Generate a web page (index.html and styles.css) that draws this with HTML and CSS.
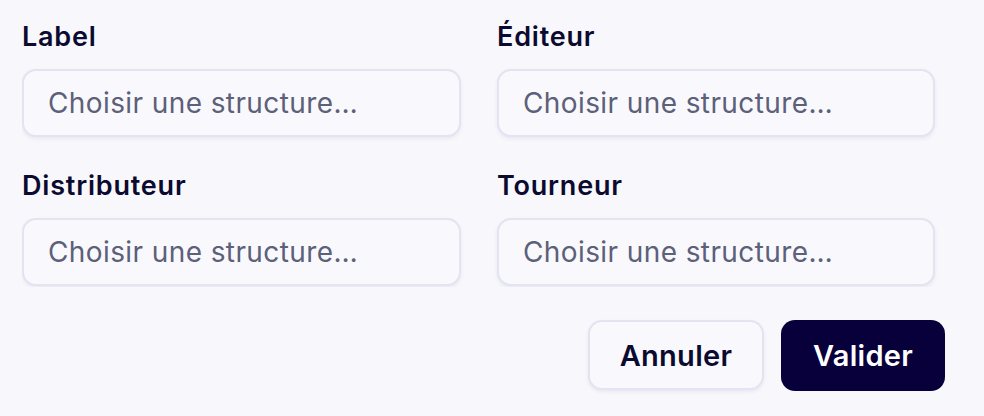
FILE: index.html
```html
<!DOCTYPE html>
<html lang="fr">
<head>
<meta charset="utf-8">
<title>Structures</title>
<link rel="stylesheet" href="styles.css">
</head>
<body>
<form class="form">
  <div class="grid">
    <div class="field">
      <label class="label" for="f1">Label</label>
      <input class="input" id="f1" type="text" placeholder="Choisir une structure…">
    </div>
    <div class="field">
      <label class="label" for="f2">Éditeur</label>
      <input class="input" id="f2" type="text" placeholder="Choisir une structure…">
    </div>
    <div class="field">
      <label class="label" for="f3">Distributeur</label>
      <input class="input" id="f3" type="text" placeholder="Choisir une structure…">
    </div>
    <div class="field">
      <label class="label" for="f4">Tourneur</label>
      <input class="input" id="f4" type="text" placeholder="Choisir une structure…">
    </div>
  </div>
  <div class="actions">
    <button type="button" class="btn btn-secondary">Annuler</button>
    <button type="button" class="btn btn-primary">Valider</button>
  </div>
</form>
</body>
</html>
```
FILE: styles.css
```css
html, body {
  margin: 0;
  padding: 0;
  background: #f8f8fc;
}

body {
  font-family: Inter, "Liberation Sans", sans-serif;
  width: 984px;
  height: 416px;
  overflow: hidden;
}

.form {
  padding: 19px 39px 0 22px;
}

.grid {
  display: grid;
  grid-template-columns: 439px 438px;
  column-gap: 36px;
  row-gap: 30px;
  height: 268px;
  overflow: hidden;
}

.field {
  display: flex;
  flex-direction: column;
  gap: 14px;
}

.label {
  font-size: 27px;
  line-height: 36px;
  font-weight: 600;
  letter-spacing: 0.8px;
  color: #0b0a30;
}

.input {
  box-sizing: border-box;
  width: 100%;
  height: 68px;
  margin: 0;
  padding: 0 20px 0 24px;
  border: 2px solid #e3e3f1;
  border-radius: 14px;
  background: #f9f9fd;
  box-shadow: 0 2px 4px rgba(40, 40, 110, 0.08);
  font-family: inherit;
  font-size: 28px;
  letter-spacing: 0.4px;
  color: #0b0a30;
  outline: none;
}

.input::placeholder {
  color: #5c6079;
  opacity: 1;
}

.actions {
  display: flex;
  justify-content: flex-end;
  gap: 17px;
  margin-top: 33px;
}

.btn {
  box-sizing: border-box;
  height: 70px;
  border-radius: 14px;
  font-family: inherit;
  font-size: 29px;
  font-weight: 600;
  letter-spacing: 0.3px;
  cursor: pointer;
  padding: 0;
}

.btn-secondary {
  width: 176px;
  background: #f9f9fd;
  border: 2px solid #e3e3f1;
  color: #0b0a30;
  box-shadow: 0 2px 4px rgba(40, 40, 110, 0.08);
}

.btn-primary {
  width: 164px;
  height: 71px;
  background: #08003a;
  border: none;
  color: #ffffff;
}
```
